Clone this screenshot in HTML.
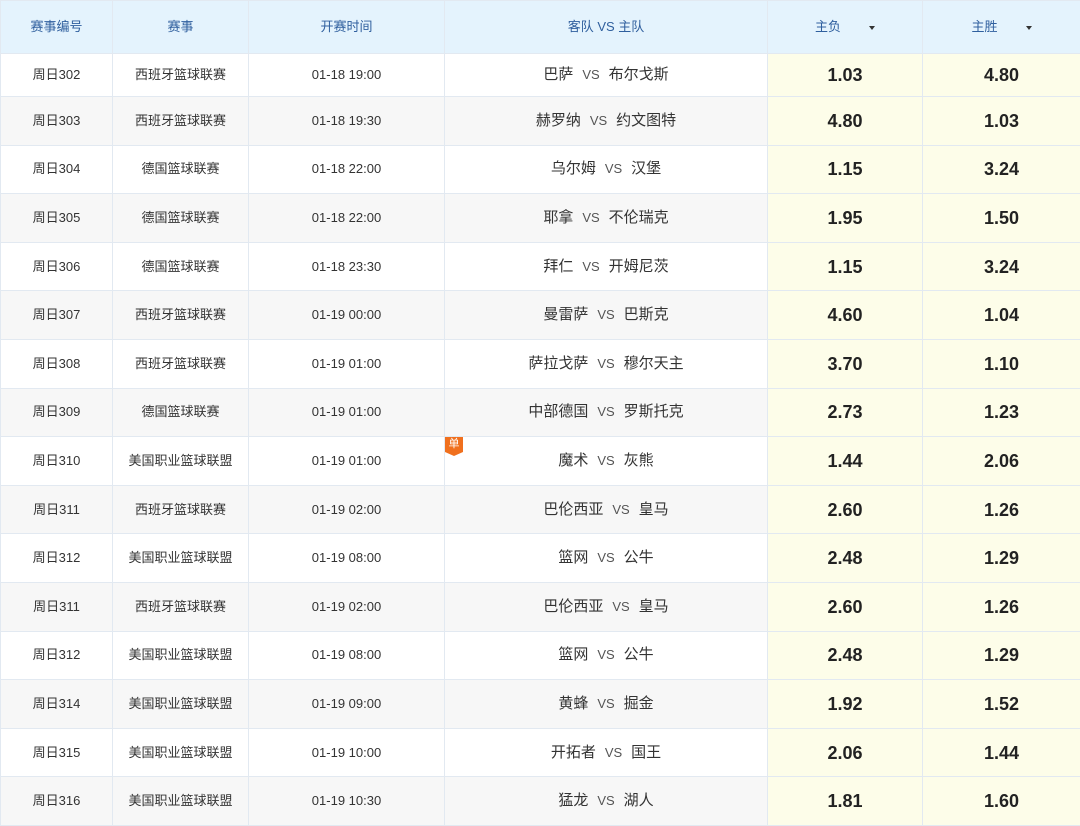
<!DOCTYPE html>
<html><head><meta charset="utf-8"><style>
body{margin:0;width:1080px;height:826px;overflow:hidden;background:#fff;font-family:"Liberation Sans","Noto Sans CJK SC",sans-serif;}
table{border-collapse:collapse;table-layout:fixed;width:1080px;}
td,th{border:1px solid #e2e9f1;text-align:center;padding:0;color:#333;font-size:13px;font-weight:normal;position:relative;line-height:20px;vertical-align:middle;}
th{height:52px;background:#e4f3fd;color:#2f5f9e;font-size:13px;}
tr.r td{height:47.6px;}
tr.f td{height:42px;}
tr.g td{background:#f7f7f7;}
td.o{background:#fdfde9!important;font-weight:bold;font-size:18px;color:#222;}
td.t{font-size:15px;}
.vs{font-size:13px;color:#555;margin:0 9px;}
.arr{display:inline-block;width:0;height:0;border-left:3.5px solid transparent;border-right:3.5px solid transparent;border-top:4px solid #333;margin-left:28px;vertical-align:middle;}
.dan{position:absolute;left:0;top:0;width:18px;height:15px;background:#f0701e;color:#fff;font-size:11px;line-height:14px;}
.dan:after{content:"";position:absolute;left:0;top:15px;border-left:9px solid transparent;border-right:9px solid transparent;border-top:4px solid #f0701e;}
</style></head><body>
<table>
<colgroup><col style="width:112px"><col style="width:136px"><col style="width:196px"><col style="width:323px"><col style="width:155px"><col style="width:158px"></colgroup>
<tr><th>赛事编号</th><th>赛事</th><th>开赛时间</th><th>客队 VS 主队</th><th>主负<span class="arr"></span></th><th>主胜<span class="arr"></span></th></tr>
<tr class="r f"><td>周日302</td><td>西班牙篮球联赛</td><td>01-18 19:00</td><td class="t">巴萨<span class="vs">VS</span>布尔戈斯</td><td class="o">1.03</td><td class="o">4.80</td></tr>
<tr class="r g"><td>周日303</td><td>西班牙篮球联赛</td><td>01-18 19:30</td><td class="t">赫罗纳<span class="vs">VS</span>约文图特</td><td class="o">4.80</td><td class="o">1.03</td></tr>
<tr class="r"><td>周日304</td><td>德国篮球联赛</td><td>01-18 22:00</td><td class="t">乌尔姆<span class="vs">VS</span>汉堡</td><td class="o">1.15</td><td class="o">3.24</td></tr>
<tr class="r g"><td>周日305</td><td>德国篮球联赛</td><td>01-18 22:00</td><td class="t">耶拿<span class="vs">VS</span>不伦瑞克</td><td class="o">1.95</td><td class="o">1.50</td></tr>
<tr class="r"><td>周日306</td><td>德国篮球联赛</td><td>01-18 23:30</td><td class="t">拜仁<span class="vs">VS</span>开姆尼茨</td><td class="o">1.15</td><td class="o">3.24</td></tr>
<tr class="r g"><td>周日307</td><td>西班牙篮球联赛</td><td>01-19 00:00</td><td class="t">曼雷萨<span class="vs">VS</span>巴斯克</td><td class="o">4.60</td><td class="o">1.04</td></tr>
<tr class="r"><td>周日308</td><td>西班牙篮球联赛</td><td>01-19 01:00</td><td class="t">萨拉戈萨<span class="vs">VS</span>穆尔天主</td><td class="o">3.70</td><td class="o">1.10</td></tr>
<tr class="r g"><td>周日309</td><td>德国篮球联赛</td><td>01-19 01:00</td><td class="t">中部德国<span class="vs">VS</span>罗斯托克</td><td class="o">2.73</td><td class="o">1.23</td></tr>
<tr class="r"><td>周日310</td><td>美国职业篮球联盟</td><td>01-19 01:00</td><td class="t"><span class="dan">单</span>魔术<span class="vs">VS</span>灰熊</td><td class="o">1.44</td><td class="o">2.06</td></tr>
<tr class="r g"><td>周日311</td><td>西班牙篮球联赛</td><td>01-19 02:00</td><td class="t">巴伦西亚<span class="vs">VS</span>皇马</td><td class="o">2.60</td><td class="o">1.26</td></tr>
<tr class="r"><td>周日312</td><td>美国职业篮球联盟</td><td>01-19 08:00</td><td class="t">篮网<span class="vs">VS</span>公牛</td><td class="o">2.48</td><td class="o">1.29</td></tr>
<tr class="r g"><td>周日311</td><td>西班牙篮球联赛</td><td>01-19 02:00</td><td class="t">巴伦西亚<span class="vs">VS</span>皇马</td><td class="o">2.60</td><td class="o">1.26</td></tr>
<tr class="r"><td>周日312</td><td>美国职业篮球联盟</td><td>01-19 08:00</td><td class="t">篮网<span class="vs">VS</span>公牛</td><td class="o">2.48</td><td class="o">1.29</td></tr>
<tr class="r g"><td>周日314</td><td>美国职业篮球联盟</td><td>01-19 09:00</td><td class="t">黄蜂<span class="vs">VS</span>掘金</td><td class="o">1.92</td><td class="o">1.52</td></tr>
<tr class="r"><td>周日315</td><td>美国职业篮球联盟</td><td>01-19 10:00</td><td class="t">开拓者<span class="vs">VS</span>国王</td><td class="o">2.06</td><td class="o">1.44</td></tr>
<tr class="r g"><td>周日316</td><td>美国职业篮球联盟</td><td>01-19 10:30</td><td class="t">猛龙<span class="vs">VS</span>湖人</td><td class="o">1.81</td><td class="o">1.60</td></tr>
</table>
</body></html>
